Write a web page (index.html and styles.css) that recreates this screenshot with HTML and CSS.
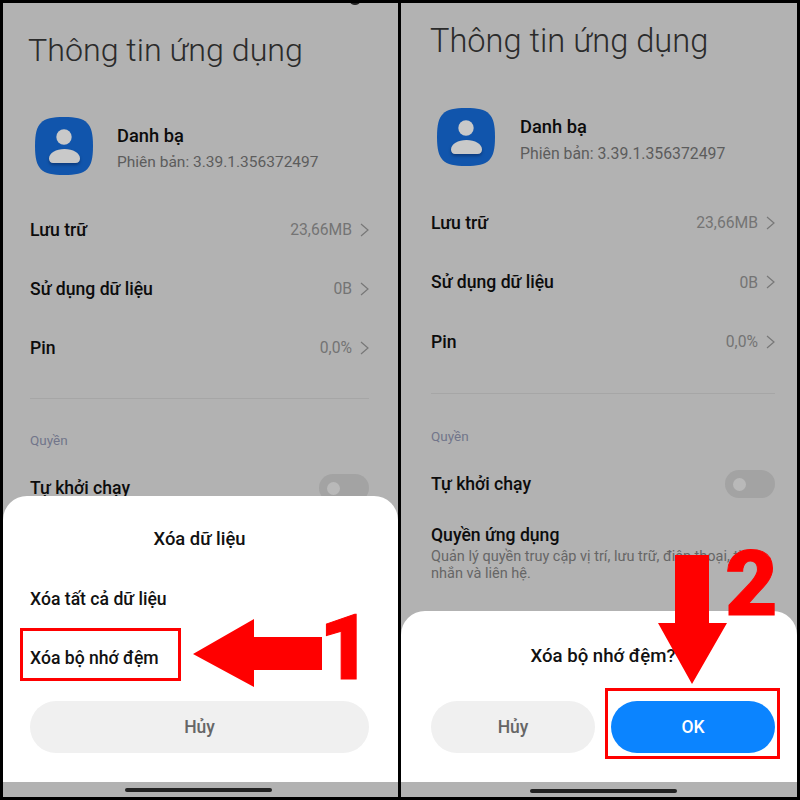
FILE: index.html
```html
<!DOCTYPE html>
<html lang="vi">
  <head>
    <meta charset="UTF-8" />
    <meta name="viewport" content="width=device-width, initial-scale=1.0" />
    <link rel="stylesheet" href="styles.css">
    <title>Xóa bộ nhớ đệm</title>
  </head>
  <body class="guide">
    <section class="phone phone--left">
      <span class="phone__camera"></span>
      <h1 class="phone__title">Thông tin ứng dụng</h1>
      <div class="app">
        <svg class="app__icon" viewBox="0 0 58 58">
          <path d="M29 0C52 0 58 6 58 29S52 58 29 58 0 52 0 29 6 0 29 0Z" fill="#1155ac"/>
          <circle cx="29" cy="20" r="7.7" fill="#c9c9c9"/>
          <path class="app__body" d="M18 46h22.5c3 0 4.5-2 4.5-4.5C45 36 38 32 29.5 32S14 36 14 41.5C14 44 15.5 46 18 46Z" fill="#c9c9c9"/>
        </svg>
        <div class="app__text">
          <p class="app__name">Danh bạ</p>
          <p class="app__version">Phiên bản: 3.39.1.356372497</p>
        </div>
      </div>
      <ul class="rows">
        <li class="row"><span class="row__label">Lưu trữ</span><span class="row__value">23,66MB</span><svg class="chevron" viewBox="0 0 9 14"><path d="M1 1l7 6-7 6"/></svg></li>
        <li class="row"><span class="row__label">Sử dụng dữ liệu</span><span class="row__value">0B</span><svg class="chevron" viewBox="0 0 9 14"><path d="M1 1l7 6-7 6"/></svg></li>
        <li class="row"><span class="row__label">Pin</span><span class="row__value">0,0%</span><svg class="chevron" viewBox="0 0 9 14"><path d="M1 1l7 6-7 6"/></svg></li>
      </ul>
      <hr class="phone__divider">
      <p class="phone__section">Quyền</p>
      <div class="row row--toggle"><span class="row__label">Tự khởi chạy</span><span class="toggle"></span></div>

      <div class="sheet">
        <h2 class="sheet__title">Xóa dữ liệu</h2>
        <p class="sheet__item">Xóa tất cả dữ liệu</p>
        <p class="sheet__item sheet__item--second">Xóa bộ nhớ đệm</p>
        <div class="sheet__actions">
          <button type="button" class="btn">Hủy</button>
        </div>
      </div>
      <div class="home"><span class="home__bar"></span></div>

      <span class="mark mark--item"></span>
      <svg class="arrow arrow--left" viewBox="0 0 129 68"><polygon points="0,35 61,0 61,18 129,18 129,51 61,51 61,68" fill="#f00"/></svg>
      <span class="step step--one">1</span>
    </section>

    <section class="phone phone--right">
      <h1 class="phone__title">Thông tin ứng dụng</h1>
      <div class="app">
        <svg class="app__icon" viewBox="0 0 58 58">
          <path d="M29 0C52 0 58 6 58 29S52 58 29 58 0 52 0 29 6 0 29 0Z" fill="#1155ac"/>
          <circle cx="29" cy="20" r="7.7" fill="#c9c9c9"/>
          <path class="app__body" d="M18 46h22.5c3 0 4.5-2 4.5-4.5C45 36 38 32 29.5 32S14 36 14 41.5C14 44 15.5 46 18 46Z" fill="#c9c9c9"/>
        </svg>
        <div class="app__text">
          <p class="app__name">Danh bạ</p>
          <p class="app__version">Phiên bản: 3.39.1.356372497</p>
        </div>
      </div>
      <ul class="rows">
        <li class="row"><span class="row__label">Lưu trữ</span><span class="row__value">23,66MB</span><svg class="chevron" viewBox="0 0 9 14"><path d="M1 1l7 6-7 6"/></svg></li>
        <li class="row"><span class="row__label">Sử dụng dữ liệu</span><span class="row__value">0B</span><svg class="chevron" viewBox="0 0 9 14"><path d="M1 1l7 6-7 6"/></svg></li>
        <li class="row"><span class="row__label">Pin</span><span class="row__value">0,0%</span><svg class="chevron" viewBox="0 0 9 14"><path d="M1 1l7 6-7 6"/></svg></li>
      </ul>
      <hr class="phone__divider">
      <p class="phone__section">Quyền</p>
      <div class="row row--toggle"><span class="row__label">Tự khởi chạy</span><span class="toggle"></span></div>
      <div class="perm">
        <div>
          <p class="row__label">Quyền ứng dụng</p>
          <p class="perm__text">Quản lý quyền truy cập vị trí, lưu trữ, điện thoại, tin nhắn và liên hệ.</p>
        </div>
        <svg class="chevron" viewBox="0 0 9 14"><path d="M1 1l7 6-7 6"/></svg>
      </div>

      <div class="sheet">
        <h2 class="sheet__title">Xóa bộ nhớ đệm?</h2>
        <div class="sheet__actions">
          <button type="button" class="btn">Hủy</button>
          <button type="button" class="btn btn--primary">OK</button>
        </div>
      </div>
      <div class="home"><span class="home__bar"></span></div>

      <span class="mark mark--ok"></span>
      <svg class="arrow arrow--down" viewBox="0 0 69 129"><polygon points="17,0 51,0 51,68 69,68 34,129 0,68 17,68" fill="#f00"/></svg>
      <span class="step step--two">2</span>
    </section>
  </body>
</html>
```

FILE: styles.css
```css
* {
  box-sizing: border-box;
}
.guide {
  margin: 0;
  width: 800px;
  height: 800px;
  padding: 3px;
  display: flex;
  gap: 3px;
  background: #000;
  font-family: Roboto, "Noto Sans", sans-serif;
  overflow: hidden;
}
p,
h1,
h2 {
  margin: 0;
}
.phone {
  position: relative;
  height: 794px;
  background: #b2b2b2;
  overflow: hidden;
}
.phone--left {
  width: 395px;
  padding: 24px 29px 0 27px;
}
.phone--right {
  width: 396px;
  padding: 15px 22px 0 30px;
}
.phone__camera {
  position: absolute;
  top: -5px;
  left: 347px;
  width: 10px;
  height: 7px;
  border-radius: 50%;
  background: #222;
}
.phone__title {
  height: 46px;
  margin-left: -2px;
  font-size: 32.2px;
  line-height: 46px;
  font-weight: 300;
  color: #2b2b2b;
  white-space: nowrap;
}
.phone--right .phone__title {
  margin-left: -1px;
  font-size: 32.6px;
}
.app {
  display: flex;
  align-items: center;
  gap: 24px;
  margin: 44px 0 0 5px;
}
.phone--right .app {
  margin: 44px 0 0 6px;
  gap: 25px;
}
.app__icon {
  width: 58px;
  height: 58px;
  flex: none;
}
.app__body {
  filter: drop-shadow(0 2px 1.5px #0b3a7c);
}
.app__text {
  padding-top: 3px;
}
.phone--right .app__text {
  padding-top: 4px;
}
.app__name {
  font-size: 18.3px;
  line-height: 24px;
  font-weight: 500;
  color: #0c0c0c;
}
.app__version {
  margin-top: 4px;
  font-size: 15.5px;
  line-height: 20px;
  color: #5c5c5c;
}
.phone--right .app__version {
  margin-top: 5px;
  font-size: 15.8px;
}
.rows {
  list-style: none;
  margin: 25px 0 0;
  padding: 0;
}
.phone--right .rows {
  margin-top: 27px;
}
.row {
  height: 59px;
  display: flex;
  align-items: center;
}
.phone--right .row {
  height: 59.5px;
}
.row__label {
  flex: 1;
  font-size: 17.6px;
  font-weight: 500;
  color: #0c0c0c;
}
.row__value {
  margin-right: 8px;
  font-size: 15.7px;
  color: #747474;
}
.chevron {
  width: 9px;
  height: 14px;
  flex: none;
  fill: none;
  stroke: #777;
  stroke-width: 1.2;
}
.phone__divider {
  height: 1px;
  margin: 21px 0 0;
  border: 0;
  background: #a6a6a6;
}
.phone__section {
  margin-top: 33px;
  font-size: 13.5px;
  line-height: 16px;
  color: #71758a;
}
.phone--right .phone__section {
  margin-top: 34px;
}
.row--toggle {
  margin-top: 10px;
}
.phone--right .row--toggle {
  margin-top: 11px;
}
.toggle {
  position: relative;
  width: 50px;
  height: 28px;
  border-radius: 14px;
  background: #a3a3a3;
}
.toggle::before {
  content: "";
  position: absolute;
  top: 8px;
  left: 8px;
  width: 13px;
  height: 13px;
  border-radius: 50%;
  background: #b9b9b9;
}
.perm {
  display: flex;
  align-items: center;
  margin-top: 11px;
}
.perm .chevron {
  margin-left: 8px;
  margin-top: 6px;
}
.perm__text {
  margin-top: 4px;
  width: 320px;
  font-size: 14.5px;
  line-height: 16.5px;
  color: #666;
}
.sheet {
  position: absolute;
  left: 0;
  right: 0;
  bottom: 15px;
  background: #fff;
  border-radius: 24px 24px 0 0;
  padding: 0 29px 29px 27px;
}
.phone--left .sheet {
  height: 286px;
}
.phone--right .sheet {
  height: 171px;
  padding: 0 22px 29px 30px;
}
.sheet__title {
  padding-top: 31px;
  font-size: 18.4px;
  line-height: 24px;
  font-weight: 500;
  text-align: center;
  color: #111;
}
.phone--right .sheet__title {
  padding-top: 33px;
  font-size: 18.6px;
}
.sheet__item {
  margin-top: 36px;
  font-size: 17.6px;
  line-height: 24px;
  font-weight: 500;
  color: #111;
}
.sheet__item--second {
  margin-top: 35px;
}
.sheet__actions {
  position: absolute;
  left: 27px;
  right: 29px;
  bottom: 29px;
  display: flex;
  gap: 16px;
}
.phone--right .sheet__actions {
  left: 30px;
  right: 22px;
}
.btn {
  flex: 1;
  height: 52px;
  border: 0;
  border-radius: 26px;
  background: #f0f0f0;
  font-family: inherit;
  font-size: 17.5px;
  font-weight: 500;
  color: #666;
}
.btn--primary {
  background: #0b84ff;
  color: #fff;
}
.home {
  position: absolute;
  left: 0;
  right: 0;
  bottom: 0;
  height: 15px;
  display: flex;
  justify-content: center;
  padding: 6px 4px 0 0;
}
.phone--right .home {
  padding: 7px 0 0 8px;
}
.home__bar {
  width: 147px;
  height: 4px;
  border-radius: 2px;
  background: #222;
}
/* red markers drawn over the screenshot */
.mark {
  position: absolute;
  border: 3px solid #f00;
}
.mark--item {
  left: 17px;
  top: 625px;
  width: 161px;
  height: 53px;
}
.mark--ok {
  left: 204px;
  top: 685px;
  width: 175px;
  height: 71px;
}
.arrow {
  position: absolute;
}
.arrow--left {
  left: 190px;
  top: 616px;
  width: 129px;
  height: 68px;
}
.arrow--down {
  left: 257px;
  top: 552px;
  width: 69px;
  height: 129px;
}
.step {
  position: absolute;
  font-size: 91px;
  line-height: 92px;
  font-weight: 900;
  color: #f00;
  -webkit-text-stroke: 1px #f00;
}
.step--one {
  left: 316px;
  top: 599px;
}
.step--two {
  left: 324px;
  top: 535px;
}
```
